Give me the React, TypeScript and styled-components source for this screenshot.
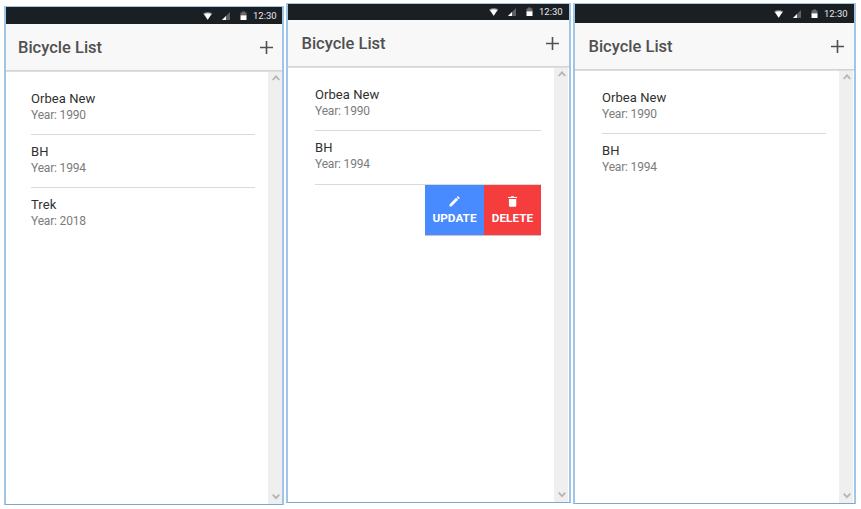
import React from "react";
import styled, { createGlobalStyle } from "styled-components";

const GlobalStyle = createGlobalStyle`
  * { box-sizing: border-box; }
  body { margin: 0; background: #fff; font-family: Roboto, "Liberation Sans", sans-serif; overflow: hidden; }
`;

const Screens = styled.main`
  display: flex;
  align-items: flex-start;
  width: 861px;
  height: 509px;
  padding-left: 4px;
`;

const Phone = styled.section<{ $top: number; $width: number; $height: number; $gap: number }>`
  display: flex;
  flex-direction: column;
  flex: none;
  width: ${(p) => p.$width}px;
  height: ${(p) => p.$height}px;
  margin: ${(p) => p.$top}px ${(p) => p.$gap}px 0 0;
  border: 2px solid #a1c5e7;
  border-top-width: 1px;
  border-bottom: 1px solid #7da7ce;
`;

const StatusBar = styled.div<{ $height: number; $inset: number }>`
  display: flex;
  flex: none;
  justify-content: flex-end;
  align-items: center;
  height: ${(p) => p.$height}px;
  padding-right: ${(p) => 5 + p.$inset}px;
  background: #1a1f24;
`;

const StatusIcons = styled.svg`
  display: block;
  width: 44px;
  height: 10px;
  margin-right: 6px;
`;

const Clock = styled.span`
  width: 24px;
  color: #e8e8e8;
  font-size: 9.5px;
  line-height: 12px;
  white-space: nowrap;
`;

const Header = styled.header<{ $inset: number }>`
  display: flex;
  flex: none;
  align-items: center;
  justify-content: space-between;
  height: 46px;
  padding: 1px ${(p) => 8 + p.$inset}px 0 ${(p) => 12 + p.$inset * 1.5}px;
  background: #f8f8f8;
`;

const Shadow = styled.div`
  flex: none;
  height: 2px;
  background: linear-gradient(#cfcfcf, #e4e4e4);
`;

const Title = styled.h1`
  margin: 0;
  color: #505050;
  font-size: 16.5px;
  font-weight: 500;
  line-height: 20px;
  letter-spacing: 0;
`;

const AddButton = styled.button`
  display: block;
  width: 15px;
  height: 15px;
  padding: 0;
  border: 0;
  background: none;
  svg { display: block; }
`;

const Content = styled.div<{ $inset: number }>`
  display: flex;
  flex: 1;
  min-height: 0;
  padding-right: ${(p) => p.$inset}px;
`;

const List = styled.ul<{ $inset: number }>`
  flex: 1;
  margin: 0 13px 0 ${(p) => 25 + p.$inset * 2}px;
  padding: 10px 0 0;
  list-style: none;
`;

const Item = styled.li<{ $line: boolean; $height: number }>`
  height: ${(p) => p.$height}px;
  padding-top: 8px;
  border-bottom: ${(p) => (p.$line ? "1px solid #dadada" : "0")};
`;

const Name = styled.div`
  color: #303030;
  font-size: 13px;
  line-height: 17px;
  letter-spacing: 0.07px;
`;

const Year = styled.div`
  color: #7c7c7c;
  font-size: 12px;
  line-height: 16px;
  letter-spacing: -0.18px;
`;

const ActionItem = styled.li`
  display: flex;
  justify-content: flex-end;
  height: 51px;
`;

const Action = styled.button<{ $color: string; $width: number }>`
  display: flex;
  flex-direction: column;
  align-items: center;
  width: ${(p) => p.$width}px;
  height: 51px;
  padding: 11px 0 0;
  border: 0;
  border-bottom: 1px solid #c9c2c4;
  background: ${(p) => p.$color};
  color: #fff;
  font: 700 11.8px/14px Roboto, sans-serif;
  svg { display: block; margin-bottom: 4px; }
`;

const Scrollbar = styled.div`
  display: flex;
  flex: none;
  flex-direction: column;
  justify-content: space-between;
  align-items: center;
  width: 14px;
  padding: 3px 0 4px 2px;
  background: #efefef;
  svg { display: block; }
`;

const Chevron = ({ down = false }: { down?: boolean }) => (
  <svg width="8" height="7" viewBox="0 0 8 7" fill="none" stroke="#b5b5b5" strokeWidth="1.8">
    <path d={down ? "M.7 1.6 4 5.2 7.3 1.6" : "M.7 5 4 1.3 7.3 5"} />
  </svg>
);

const Pencil = () => (
  <svg width="11" height="11" viewBox="0.5 0.5 12 12" fill="#fff">
    <path d="M1 9.7 8.2 2.5 10.4 4.7 3.2 11.9H1zM8.9 1.8l.8-.8q.5-.4 1 0l1.2 1.2q.4.5 0 1l-.8.8z" />
  </svg>
);

const Trash = () => (
  <svg width="11" height="11" viewBox="0.5 0.5 12 12" fill="#fff">
    <path d="M1.7 1.5h2.8l.8-.8h2.6l.8.8h2.8v1.2H1.7zM2.6 3.7h8v7.3q0 1.2-1.2 1.2H3.8q-1.2 0-1.2-1.2z" />
  </svg>
);

type Bike = { name: string; year: number; height: number; line?: boolean };
type ScreenProps = {
  top: number; width: number; height: number; gap: number;
  status: number; inset: number; bikes: Bike[]; actions?: boolean;
};

const Screen = ({ top, width, height, gap, status, inset, bikes, actions }: ScreenProps) => (
  <Phone $top={top} $width={width} $height={height} $gap={gap}>
    <StatusBar $height={status} $inset={inset}>
      <StatusIcons viewBox="0 0 44 10">
        <path d="M0 2.4Q4.7-.5 9.4 2.4L4.7 8.8z" fill="#777" />
        <path d="M1 3.1Q4.7 1.6 8.4 3.1L4.7 8.8z" fill="#fff" />
        <path d="M27 1v8h-8z" fill="#5d6164" />
        <path d="M23 5v4h-4z" fill="#fff" />
        <path d="M37.5 1.6h1.5V.6h3v1h1.5v3.4h-6z" fill="#686b6e" />
        <path d="M37.5 4.4h6V9h-6z" fill="#fff" />
      </StatusIcons>
      <Clock>12:30</Clock>
    </StatusBar>
    <Header $inset={inset}>
      <Title>Bicycle List</Title>
      <AddButton aria-label="Add bicycle">
        <svg width="15" height="15" viewBox="0 0 15 15" stroke="#505050" strokeWidth="1.6">
          <path d="M7.5 1v13M1 7.5h13" />
        </svg>
      </AddButton>
    </Header>
    <Shadow />
    <Content $inset={inset}>
      <List $inset={inset}>
        {bikes.map((bike) => (
          <Item key={bike.name} $height={bike.height} $line={bike.line !== false}>
            <Name>{bike.name}</Name>
            <Year>Year: {bike.year}</Year>
          </Item>
        ))}
        {actions && (
          <ActionItem>
            <Action $color="#488aff" $width={59}><Pencil />UPDATE</Action>
            <Action $color="#f53d3d" $width={57}><Trash />DELETE</Action>
          </ActionItem>
        )}
      </List>
      <Scrollbar><Chevron /><Chevron down /></Scrollbar>
    </Content>
  </Phone>
);

export default function App() {
  return (
    <>
      <GlobalStyle />
      <Screens>
        <Screen top={6} width={280} height={499} gap={2} status={17} inset={0}
          bikes={[
            { name: "Orbea New", year: 1990, height: 53 },
            { name: "BH", year: 1994, height: 53 },
            { name: "Trek", year: 2018, height: 53, line: false },
          ]} />
        <Screen top={3} width={285} height={500} gap={2} status={16} inset={1} actions
          bikes={[
            { name: "Orbea New", year: 1990, height: 53 },
            { name: "BH", year: 1994, height: 54 },
          ]} />
        <Screen top={3} width={283} height={501} gap={0} status={19} inset={1}
          bikes={[
            { name: "Orbea New", year: 1990, height: 53 },
            { name: "BH", year: 1994, height: 53, line: false },
          ]} />
      </Screens>
    </>
  );
}
